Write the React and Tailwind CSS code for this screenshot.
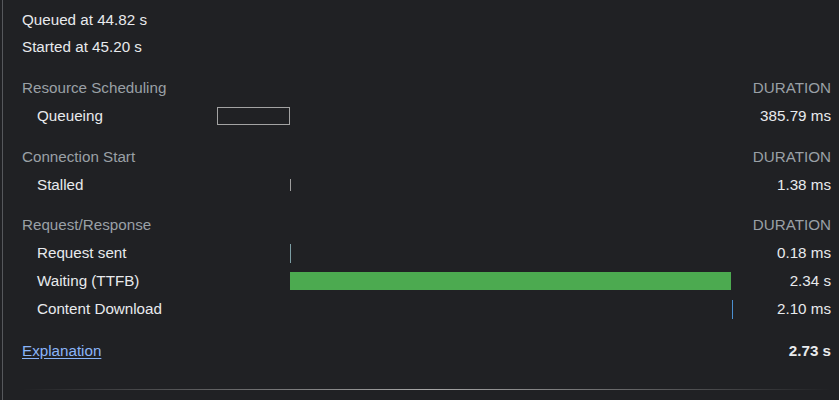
const TOTAL = 2730

const SECTIONS = [
  {
    title: 'Resource Scheduling',
    rows: [{ label: 'Queueing', start: 0, dur: 385.79, value: '385.79 ms', kind: 'queue' }],
  },
  {
    title: 'Connection Start',
    rows: [{ label: 'Stalled', start: 385.79, dur: 1.38, value: '1.38 ms', kind: 'stalled' }],
  },
  {
    title: 'Request/Response',
    rows: [
      { label: 'Request sent', start: 387.17, dur: 0.18, value: '0.18 ms', kind: 'sent' },
      { label: 'Waiting (TTFB)', start: 387.35, dur: 2340, value: '2.34 s', kind: 'wait' },
      { label: 'Content Download', start: 2727.35, dur: 2.1, value: '2.10 ms', kind: 'download' },
    ],
  },
]

const BAR_CLASS = {
  queue: 'h-[18px] border border-[#a3a3a3]',
  stalled: 'h-[12px] bg-[#9e9e9e]',
  sent: 'h-[19px] bg-[#7c9ea4]',
  wait: 'h-[18px] bg-[#4caa50]',
  download: 'h-[19px] bg-[#4b8fd0]',
}

export default function App() {
  return (
    <div className="w-[839px] h-[400px] bg-[#202124] text-[15.2px] text-[#e8eaed]"
      style={{ fontFamily: '"Liberation Sans", Arial, sans-serif' }}>
      <div className="ml-[2px] h-full border-l border-[#56585c] pl-[19px] pr-[8px] pt-[7px]">
        <div className="h-[27px] flex items-center">Queued at 44.82 s</div>
        <div className="h-[27px] flex items-center">Started at 45.20 s</div>

        {SECTIONS.map((s, i) => (
          <div key={s.title} className={i === 2 ? 'mt-[12px]' : 'mt-[13px]'}>
            <div className="h-[28px] flex items-center justify-between text-[#9aa0a6]">
              <span>{s.title}</span>
              <span>DURATION</span>
            </div>
            {s.rows.map(r => (
              <Row key={r.label} row={r} />
            ))}
          </div>
        ))}

        {/* Footer */}
        <div className="mt-[14px] h-[28px] flex items-center justify-between">
          <a href="#" className="text-[#8ab4f8] underline underline-offset-2">Explanation</a>
          <span className="font-bold">2.73 s</span>
        </div>

        <div className="mt-[24px] h-px bg-gradient-to-r from-transparent via-[#a8a8a8] to-transparent" />
      </div>
    </div>
  )
}

function Row({ row }) {
  const left = (row.start / TOTAL) * 100
  const width = Math.max((row.dur / TOTAL) * 100, 0)
  return (
    <div className="h-[28px] flex items-center">
      <span className="w-[195px] pl-[15px] shrink-0">{row.label}</span>
      <div className="relative w-[515px] h-full flex items-center">
        <div
          className={`absolute min-w-px ${BAR_CLASS[row.kind]}`}
          style={{ left: `${left}%`, width: `${width}%` }}
        />
      </div>
      <span className="flex-1 text-right">{row.value}</span>
    </div>
  )
}
